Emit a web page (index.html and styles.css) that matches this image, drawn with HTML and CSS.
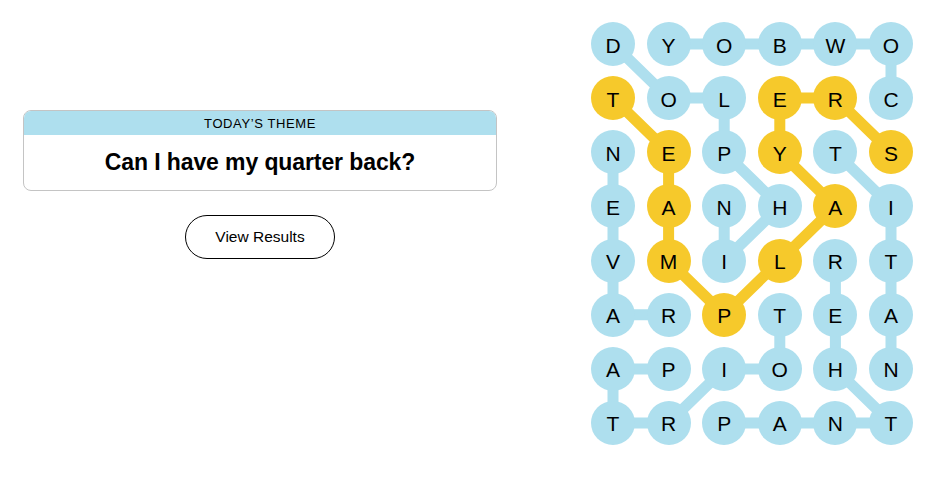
FILE: index.html
```html
<!DOCTYPE html>
<html lang="en">
<head>
    <meta charset="utf-8">
    <meta name="viewport" content="width=device-width,initial-scale=1.0">
    <link rel="stylesheet" href="styles.css">
</head>
<body>
    <div class="page">
        <div class="side">
            <div class="theme">
                <div class="theme-head">TODAY’S THEME</div>
                <div class="theme-clue">Can I have my quarter back?</div>
            </div>
            <button class="results">View Results</button>
        </div>

        <div class="board">
            <svg class="links" viewBox="0 0 322 423" width="322" height="423">
                <g class="found">
                    <polyline points="22,22 77.6,76.1 133.2,76.1 133.2,130.3 188.8,184.4 133.2,238.6 133.2,184.4"/>
                    <polyline points="300,76.1 300,22 77.6,22"/>
                    <polyline points="77.6,292.7 22,292.7 22,130.3"/>
                    <polyline points="244.4,130.3 300,184.4 300,346.9"/>
                    <polyline points="133.2,401 300,401 244.4,346.9 244.4,238.6"/>
                    <polyline points="77.6,346.9 22,346.9 22,401 77.6,401 133.2,346.9 188.8,346.9 188.8,292.7"/>
                </g>
                <g class="spangram">
                    <polyline points="22,76.1 77.6,130.3 77.6,238.6 133.2,292.7 188.8,238.6 244.4,184.4 188.8,130.3 188.8,76.1 244.4,76.1 300,130.3"/>
                </g>
            </svg>
            <div class="grid">
                <span class="cell">D</span><span class="cell">Y</span><span class="cell">O</span><span class="cell">B</span><span class="cell">W</span><span class="cell">O</span>
                <span class="cell span">T</span><span class="cell">O</span><span class="cell">L</span><span class="cell span">E</span><span class="cell span">R</span><span class="cell">C</span>
                <span class="cell">N</span><span class="cell span">E</span><span class="cell">P</span><span class="cell span">Y</span><span class="cell">T</span><span class="cell span">S</span>
                <span class="cell">E</span><span class="cell span">A</span><span class="cell">N</span><span class="cell">H</span><span class="cell span">A</span><span class="cell">I</span>
                <span class="cell">V</span><span class="cell span">M</span><span class="cell">I</span><span class="cell span">L</span><span class="cell">R</span><span class="cell">T</span>
                <span class="cell">A</span><span class="cell">R</span><span class="cell span">P</span><span class="cell">T</span><span class="cell">E</span><span class="cell">A</span>
                <span class="cell">A</span><span class="cell">P</span><span class="cell">I</span><span class="cell">O</span><span class="cell">H</span><span class="cell">N</span>
                <span class="cell">T</span><span class="cell">R</span><span class="cell">P</span><span class="cell">A</span><span class="cell">N</span><span class="cell">T</span>
            </div>
        </div>
    </div>
</body>
</html>
```

FILE: styles.css
```css
body {margin: 0; background: #fff; color: #000; font-family: "Liberation Sans", Arial, sans-serif;}
.page {display: flex; align-items: flex-start;}

.side {width: 474px; margin-left: 23px; padding-top: 110px; display: flex; flex-direction: column; align-items: center;}
.theme {width: 100%; box-sizing: border-box; border: 1px solid #c4c4c4; border-radius: 8px; overflow: hidden;}
.theme-head {background: #aedfee; height: 24px; line-height: 25px; text-align: center; font-size: 13px; letter-spacing: 0.6px;}
.theme-clue {height: 55px; line-height: 54px; text-align: center; font-size: 23px; font-weight: bold; letter-spacing: -0.1px;}
.results {margin-top: 24px; width: 150px; height: 44px; border: 1px solid #000; border-radius: 22px; background: #fff; color: #000; font-family: inherit; font-size: 15.5px; cursor: pointer;}

.board {position: relative; margin-left: 94px; margin-top: 22px; width: 322px; height: 423px;}
.links {position: absolute; left: 0; top: 0;}
.links polyline {fill: none; stroke-width: 11; stroke-linecap: round; stroke-linejoin: round;}
.found polyline {stroke: #aedfee;}
.spangram polyline {stroke: #f6c92b;}

.grid {position: relative; display: grid; grid-template-columns: repeat(6, 44px); column-gap: 11.6px; row-gap: 10.14px;}
.cell {width: 44px; height: 44px; box-sizing: border-box; padding-top: 2px; border-radius: 50%; background: #aedfee; display: flex; align-items: center; justify-content: center; font-size: 21px; line-height: 1;}
.cell.span {background: #f6c92b;}
```
